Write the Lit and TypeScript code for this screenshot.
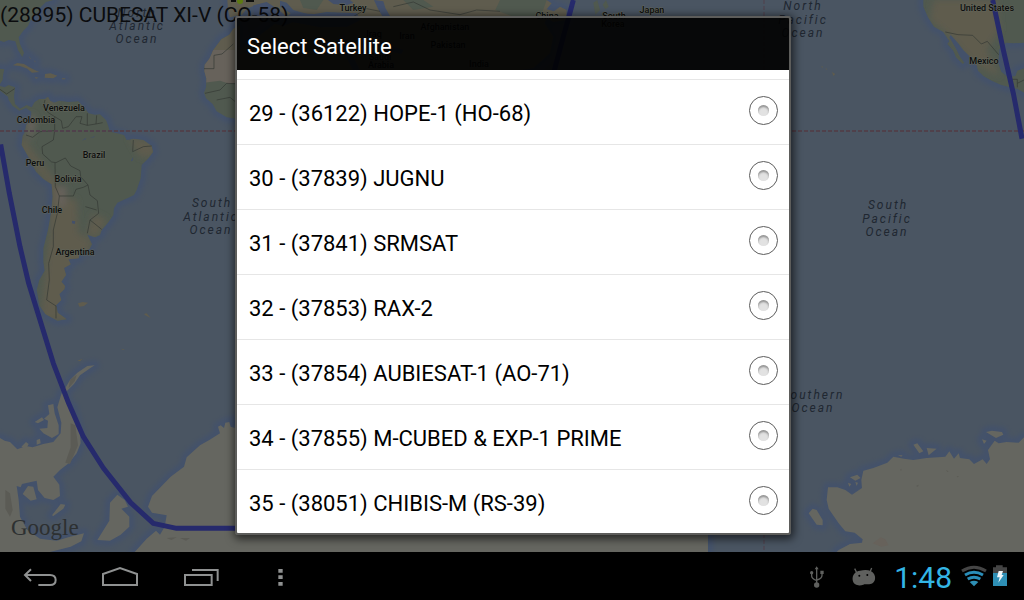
import { LitElement, html, svg, css } from "lit";
import { customElement, property } from "lit/decorators.js";

interface Satellite {
  index: number;
  norad: string;
  name: string;
}

interface MapLabel {
  x: number;
  y: number;
  text: string;
}

const SATELLITES: Satellite[] = [
  { index: 29, norad: "36122", name: "HOPE-1 (HO-68)" },
  { index: 30, norad: "37839", name: "JUGNU" },
  { index: 31, norad: "37841", name: "SRMSAT" },
  { index: 32, norad: "37853", name: "RAX-2" },
  { index: 33, norad: "37854", name: "AUBIESAT-1 (AO-71)" },
  { index: 34, norad: "37855", name: "M-CUBED & EXP-1 PRIME" },
  { index: 35, norad: "38051", name: "CHIBIS-M (RS-39)" },
];

const COUNTRIES: MapLabel[] = [
  { x: 64, y: 111, text: "Venezuela" },
  { x: 36, y: 123, text: "Colombia" },
  { x: 94, y: 158, text: "Brazil" },
  { x: 35, y: 166, text: "Peru" },
  { x: 68, y: 182, text: "Bolivia" },
  { x: 52, y: 213, text: "Chile" },
  { x: 75, y: 255, text: "Argentina" },
  { x: 987, y: 11, text: "United States" },
  { x: 984, y: 64, text: "Mexico" },
  { x: 353, y: 11, text: "Turkey" },
  { x: 547, y: 19, text: "China" },
  { x: 614, y: 19, text: "South" },
  { x: 613, y: 27, text: "Korea" },
  { x: 652, y: 13, text: "Japan" },
  { x: 445, y: 30, text: "Afghanistan" },
  { x: 374, y: 37, text: "Iraq" },
  { x: 407, y: 39, text: "Iran" },
  { x: 448, y: 48, text: "Pakistan" },
  { x: 380, y: 60, text: "Saudi" },
  { x: 381, y: 68, text: "Arabia" },
  { x: 479, y: 67, text: "India" },
];

const OCEANS: MapLabel[] = [
  { x: 137, y: 17, text: "North" },
  { x: 137, y: 30, text: "Atlantic" },
  { x: 137, y: 43, text: "Ocean" },
  { x: 212, y: 207, text: "South" },
  { x: 211, y: 221, text: "Atlantic" },
  { x: 211, y: 234, text: "Ocean" },
  { x: 803, y: 10, text: "North" },
  { x: 803, y: 24, text: "Pacific" },
  { x: 803, y: 37, text: "Ocean" },
  { x: 888, y: 209, text: "South" },
  { x: 887, y: 223, text: "Pacific" },
  { x: 887, y: 236, text: "Ocean" },
  { x: 813, y: 399, text: "Southern" },
  { x: 813, y: 412, text: "Ocean" },
];

const SOUTH_AMERICA =
  "M0,258 L14,262 26,255 45,262 42,290 45,312 60,326 80,315 95,322 104,306 118,297 135,297 144,290 150,302 162,308 178,302 205,306 235,304 252,322 266,340 285,344 300,343 318,360 324,376 330,395 345,398 372,405 380,420 400,416 430,420 455,438 459,456 444,476 425,495 422,535 410,570 402,585 385,593 352,608 342,625 340,645 324,668 305,690 300,705 285,712 262,704 276,733 268,748 240,752 236,775 205,778 212,793 192,804 198,825 184,845 195,858 193,868 178,882 184,900 168,916 173,938 200,958 172,962 136,942 118,916 110,870 118,840 134,812 130,785 130,745 144,690 153,640 158,590 155,553 130,537 108,515 85,470 65,435 68,408 75,395 78,375 92,360 94,335 78,324 58,332 38,318 26,300 24,290 0,272Z";

const NORTH_AMERICA_EAST =
  "M0,0 H160 L138,6 122,22 108,44 92,60 84,78 70,92 56,112 60,132 72,158 67,171 54,150 46,124 26,120 12,126 0,122Z M0,206 L13,208 9,226 8,240 0,252Z";

const CARIBBEAN =
  "M38,196 L52,189 72,192 88,202 104,210 118,216 96,218 82,206 60,198Z M135,222 L152,220 172,227 160,235 134,233Z M104,231 l12,2 -8,3Z M186,235 h10 v3 h-10Z M88,168 l4,8 -2,1Z M102,180 l5,6 -2,1Z";

const AFRICA_WEST =
  "M720,76 L700,86 688,104 664,118 640,150 628,176 614,194 613,214 619,236 618,262 612,278 618,295 638,312 650,334 680,352 720,358Z";

const EURASIA =
  "M682,0 H1640 L1655,10 1640,28 1662,34 1680,20 1700,30 1698,60 1660,66 1640,54 1634,70 1660,110 1650,160 1600,205 1540,214 H720 V150 L840,60 900,70 1040,80 1080,60 1068,40 980,36 930,44 880,30 860,8 840,2 840,20 872,40 860,52 828,24 800,8 770,14 740,26 726,44 690,52 684,30Z";

const SEAS =
  "M760,16 L800,6 836,30 862,52 886,34 900,40 980,44 1072,40 1076,62 1040,80 960,82 880,66 850,78 790,62 762,44Z M984,0 H1050 L1060,8 1040,16 1000,12Z M1122,0 L1150,4 1156,24 1170,48 1148,50 1134,26Z M1110,104 L1150,128 1210,150 1204,162 1150,150Z M1030,100 L1050,150 1080,212 1060,212 1028,150Z";

const NORTH_AMERICA_WEST =
  "M2770,0 H3072 V128 L3040,130 3018,128 2998,148 2995,190 3004,215 3024,232 3046,228 3052,212 3072,205 V278 L3052,266 3030,262 3002,254 2975,242 2950,228 2934,212 2930,196 2912,172 2890,150 2875,130 2852,104 2848,112 2868,146 2880,170 2893,188 2888,192 2868,172 2860,152 2842,132 2848,124 2830,96 2802,80 2784,52 2770,20Z";

const ANTARCTICA_WEST =
  "M0,1314 L14,1322 30,1326 52,1348 78,1338 98,1342 130,1332 160,1326 182,1300 184,1268 172,1222 184,1182 196,1164 210,1140 232,1118 262,1098 284,1096 268,1106 240,1126 222,1152 200,1174 198,1200 218,1220 228,1256 240,1300 242,1330 230,1360 206,1390 180,1410 160,1430 178,1454 180,1488 160,1500 134,1494 114,1470 110,1442 66,1452 62,1462 50,1458 56,1500 60,1550 82,1590 120,1616 170,1622 210,1610 252,1600 244,1624 212,1640 150,1656 H0Z M144,1216 L160,1212 164,1240 176,1276 176,1302 156,1314 130,1300 118,1286 142,1284 144,1262 132,1256 148,1242Z M104,1266 l22,-14 6,8 -18,10Z M64,1340 l14,-14 8,6 -6,12Z M110,1320 l10,-4 2,14 -12,4Z M68,1482 L84,1458 100,1460 110,1498 92,1502Z M156,1546 L182,1512 196,1514 190,1526 160,1548Z M292,1620 L328,1562 330,1508 352,1484 374,1500 384,1520 364,1526 388,1550 388,1580 362,1604 330,1622Z";

const ANTARCTICA_MID =
  "M720,1260 L706,1260 704,1284 692,1280 688,1266 676,1268 672,1284 662,1276 654,1280 660,1300 628,1320 600,1336 560,1372 552,1400 512,1430 456,1488 444,1520 456,1538 500,1546 494,1580 480,1604 468,1592 440,1616 404,1656 H2124 V1260Z";

const ANTARCTICA_EAST =
  "M3072,1312 L3056,1328 3020,1326 2996,1330 2984,1322 2964,1350 2970,1378 2960,1392 2948,1378 2922,1392 2908,1378 2880,1374 2876,1360 2862,1376 2848,1354 2836,1370 2780,1374 2740,1380 2712,1376 2680,1370 2662,1388 2620,1404 2590,1412 2584,1440 2586,1464 2556,1484 2536,1470 2512,1462 2484,1462 2480,1500 2486,1526 2516,1570 2536,1594 2564,1598 2588,1618 2586,1628 2550,1632 2516,1650 2510,1656 H3072Z M2426,1540 L2438,1526 2450,1530 2468,1560 2468,1576 2450,1574Z M2740,1334 l12,-4 18,24 -12,6Z M2780,1344 l30,2 -24,20Z M2958,1296 l18,-4 30,4 4,8 -22,10Z M2946,1318 l14,4 -8,10Z M2550,1432 l22,-8 10,10 -16,8Z M2544,1448 l10,4 -6,8Z M2566,1446 l8,2 -4,10Z M2694,1366 l14,0 -4,4Z";

const ISLANDS =
  "M234,910 l14,-4 16,2 -12,10 -14,2Z M432,942 l8,-2 12,14 -16,-8Z M362,1046 l12,2 -4,2Z M232,1082 l16,-6 -8,8Z M2464,198 l6,3 -4,2Z M2496,216 l10,6 -6,6Z M2476,205 l6,2 -3,2Z";

const BORDERS =
  "M135,300 L130,320 142,336 164,350 164,392 M164,350 L184,362 188,385 205,380 228,350 246,350 240,370 262,376 262,340 M262,376 L288,372 290,346 M288,372 L308,368 M78,405 L98,412 120,395 164,392 160,420 126,440 128,462 155,486 168,488 196,474 212,498 240,512 242,530 264,555 250,562 228,568 220,588 178,588 166,560 165,488 M264,555 L270,585 292,602 296,640 270,660 262,700 M256,620 L290,630 M270,660 L305,688 M178,588 L172,640 160,690 160,740 146,790 148,840 140,900 168,918 168,955 M400,420 L398,455 430,440 455,438 M0,268 L20,282 44,266 M612,206 L642,206 642,166 666,162 700,132 M615,280 L660,270 680,250 720,252 M650,300 L690,292 712,310 M2836,96 L2874,104 2918,106 2944,132 2962,124 2984,150 2996,164 M3030,262 V238 H3052 V262 M3052,250 L3072,240 M1180,20 L1240,6 1290,30 1380,44 1430,30 1500,34 M1060,50 L1100,26 1140,34";

@customElement("world-map")
export class WorldMap extends LitElement {
  static styles = css`
    :host {
      display: block;
      overflow: hidden;
      background: #4a5562;
    }
    .canvas {
      display: block;
      width: 100%;
      height: 100%;
    }
    .shelf {
      fill: none;
      stroke: #405070;
      stroke-width: 30;
      stroke-linejoin: round;
      opacity: 0.6;
      filter: blur(6px);
    }
    .green {
      fill: #50594f;
    }
    .tan {
      fill: #5f5c4e;
    }
    .sand {
      fill: #67625b;
    }
    .ice {
      fill: #656660;
    }
    .rock {
      fill: #5b5b55;
    }
    .sea {
      fill: #43506a;
    }
    .border {
      fill: none;
      stroke: #343833;
      stroke-width: 2;
    }
    .grid {
      fill: none;
      stroke: #50414b;
      stroke-width: 6;
      stroke-dasharray: 12 6;
    }
    .meridian {
      fill: none;
      stroke: #50414b;
      stroke-width: 3;
      stroke-dasharray: 12 6;
    }
    .track {
      fill: none;
      stroke: #262a6c;
      stroke-width: 15;
      stroke-linejoin: round;
    }
    .country {
      font: 500 9px Roboto, sans-serif;
      fill: #0d0e0d;
      stroke: #62665c;
      stroke-width: 1px;
      paint-order: stroke;
      text-anchor: middle;
    }
    .ocean {
      font: italic 400 12px Roboto, sans-serif;
      letter-spacing: 2px;
      fill: #202731;
      text-anchor: middle;
    }
    .brand {
      font: 400 23px "Liberation Serif", serif;
      fill: #2d3031;
    }
  `;

  render() {
    return html`
      <svg
        class="canvas"
        viewBox="0 0 1024 552"
        preserveAspectRatio="xMidYMid slice"
        role="img"
        aria-label="World map with satellite ground track"
      >
        <defs>
          <clipPath id="sa"><path d=${SOUTH_AMERICA} /></clipPath>
          <clipPath id="na"><path d=${NORTH_AMERICA_WEST} /></clipPath>
          <clipPath id="af"><path d=${AFRICA_WEST} /></clipPath>
          <filter id="soft"><feGaussianBlur stdDeviation="9" /></filter>
        </defs>
        <g transform="scale(0.33333)">
          <g class="shelf">
            <path d=${SOUTH_AMERICA} />
            <path d=${NORTH_AMERICA_EAST} />
            <path d=${NORTH_AMERICA_WEST} />
            <path d=${CARIBBEAN} />
            <path d=${AFRICA_WEST} />
            <path d=${EURASIA} />
            <path d=${ANTARCTICA_WEST} />
            <path d=${ANTARCTICA_MID} />
            <path d=${ANTARCTICA_EAST} />
          </g>
          <path class="green" d=${SOUTH_AMERICA} />
          <g clip-path="url(#sa)">
            <g filter="url(#soft)">
              <path
                class="tan"
                d="M60,400 L90,440 165,540 185,590 230,600 235,700 275,720 240,960 120,960 150,700 150,560 60,450Z M385,410 L470,430 460,470 420,470Z M130,285 L170,300 150,330Z M280,640 L320,660 290,715 260,700Z"
              />
              <path class="sand" d="M80,370 l18,-30 10,30 -20,60Z M170,560 l30,0 -5,60 -20,0Z" />
            </g>
            <path
              class="sea"
              d="M216,662 l10,2 -2,8 -8,-2Z M400,470 l-8,14 6,-2Z M245,422 l12,-8 2,3Z M270,414 l14,-6 -2,4Z M135,312 l6,6 -4,6Z M380,418 l12,-2 -4,5Z"
            />
          </g>
          <path class="green" d=${NORTH_AMERICA_EAST} />
          <path class="tan" d=${CARIBBEAN} />
          <path class="green" d=${AFRICA_WEST} />
          <g clip-path="url(#af)">
            <path class="tan" d="M600,60 H720 V165 H640Z" />
            <path class="sand" d="M600,150 H720 V246 L690,252 660,242 600,250Z" />
          </g>
          <path class="tan" d=${EURASIA} />
          <path
            class="green"
            d="M900,0 h70 l-20,30 -40,-6Z M1210,0 h60 l30,20 -60,10Z M1500,0 h140 l-14,40 -60,20 -80,-30Z M1780,8 l12,-8 8,30 -14,14Z M1808,14 l10,-14 8,20 -10,8Z"
          />
          <path class="sea" d=${SEAS} />
          <path class="green" d=${NORTH_AMERICA_WEST} />
          <g clip-path="url(#na)">
            <g filter="url(#soft)">
              <path
                class="tan"
                d="M2800,0 H2990 L3000,90 2960,150 3000,230 2920,190 2840,100 2790,60Z"
              />
            </g>
          </g>
          <path class="tan" d=${ISLANDS} />
          <path class="ice" d=${ANTARCTICA_WEST} />
          <path class="ice" d=${ANTARCTICA_MID} />
          <path class="ice" d=${ANTARCTICA_EAST} />
          <path
            class="rock"
            d="M212,1270 l14,6 8,60 -24,56 -14,-4 16,-46Z M16,1470 l14,10 8,50 -8,20 -14,-24Z M500,1614 l30,-2 -16,8Z M540,1614 l30,0 -12,8Z M210,1140 l20,-16 -6,20 -18,20Z M2700,1410 l4,-4 0,6Z M2748,1458 l8,-4 -2,6Z M2838,1410 l8,4 -4,2Z M2870,1428 l8,2 -6,2Z"
          />
          <path class="sand" d="M2618,1630 l24,-18 14,6 10,18 -22,4Z" />
          <path class="border" d=${BORDERS} />
          <path class="grid" d="M0,393 H3072" />
          <path class="meridian" d="M2292,0 V1656" />
          <path
            class="track"
            d="M2,433 L28,580 60,740 86,850 120,960 160,1090 206,1210 250,1310 310,1404 392,1508 460,1570 530,1585 H760 M1720,0 L1704,60 1690,110 1650,260 M2978,0 L3010,150 3040,280 3066,416"
          />
        </g>
        ${COUNTRIES.map((l) => svg`<text class="country" x=${l.x} y=${l.y}>${l.text}</text>`)}
        ${OCEANS.map((l) => svg`<text class="ocean" x=${l.x} y=${l.y}>${l.text}</text>`)}
        <circle cx="240" cy="1" r="3" fill="#5d7a12" />
        <path d="M231,1 h5 M246,1 h8" stroke="#0d0e0d" stroke-width="2" />
        <text class="brand" x="11" y="535">Google</text>
      </svg>
    `;
  }
}

@customElement("satellite-dialog")
export class SatelliteDialog extends LitElement {
  @property({ attribute: false }) satellites: Satellite[] = [];

  static styles = css`
    :host {
      box-sizing: border-box;
      display: flex;
      flex-direction: column;
      max-width: 556px;
      width: 100%;
      max-height: 100%;
      border: 2px solid #5d5d5b;
      border-radius: 3px;
      box-shadow: 1px 2px 9px 2px rgba(0, 0, 0, 0.6);
      font-family: Roboto, sans-serif;
      overflow: hidden;
    }
    .title {
      flex: none;
      margin: 0;
      padding: 6px 10px 0;
      background: rgba(0, 0, 0, 0.9);
      color: #fff;
      font-size: 22px;
      font-weight: 400;
      line-height: 46px;
    }
    .list {
      margin: 0;
      padding: 0;
      border: 0;
      min-width: 0;
      min-height: 0;
      overflow: hidden;
      background: #fff;
    }
    .previous {
      height: 9px;
      border-bottom: 1px solid #e6e6e6;
    }
    .row {
      display: flex;
      align-items: center;
      justify-content: space-between;
      gap: 12px;
      height: 64px;
      padding: 0 11px 0 12px;
      border-bottom: 1px solid #e6e6e6;
      color: #000;
      font-size: 22px;
    }
    .name {
      padding-top: 2px;
    }
    .radio {
      appearance: none;
      flex: none;
      box-sizing: border-box;
      display: grid;
      place-items: center;
      width: 29px;
      height: 29px;
      margin: 0 0 3px;
      border: 1px solid #5c5c5c;
      border-radius: 50%;
      background: #fff;
    }
    .radio::before {
      content: "";
      width: 11px;
      height: 11px;
      border-radius: 50%;
      background: #e2e2e2;
      box-shadow: inset 0 2px 2px #949494;
    }
    .radio:checked::before {
      background: #33b5e5;
    }
  `;

  render() {
    return html`
      <h1 class="title">Select Satellite</h1>
      <fieldset class="list" aria-label="Select Satellite">
        <div class="previous"></div>
        ${this.satellites.map(
          (s) => html`
            <label class="row">
              <span class="name">${s.index} - (${s.norad}) ${s.name}</span>
              <input class="radio" type="radio" name="satellite" value=${s.norad} />
            </label>
          `
        )}
      </fieldset>
    `;
  }
}

@customElement("system-bar")
export class SystemBar extends LitElement {
  static styles = css`
    :host {
      display: flex;
      align-items: center;
      justify-content: space-between;
      height: 48px;
      background: #000;
      font-family: Roboto, sans-serif;
    }
    .keys,
    .status {
      display: flex;
      align-items: center;
    }
    .status {
      padding-right: 17px;
    }
    .key {
      width: 80px;
      height: 48px;
      padding: 0;
      border: 0;
      background: none;
    }
    .icon {
      display: block;
      height: 48px;
    }
    .line {
      fill: none;
      stroke: #8f9191;
      stroke-width: 6;
    }
    .solid {
      fill: #8f9191;
    }
    .grey {
      fill: #5f605e;
    }
    .wire {
      fill: none;
      stroke: #5f605e;
      stroke-width: 4;
    }
    .usb {
      width: 16px;
      margin-right: 27px;
    }
    .droid {
      width: 24px;
      margin-right: 18px;
    }
    .clock {
      padding-top: 3px;
      color: #33b5e5;
      font-size: 30px;
      line-height: 45px;
      margin-right: 9px;
    }
    .wifi {
      width: 26px;
      margin-right: 6px;
    }
    .battery {
      width: 14px;
    }
    .dim {
      fill: none;
      stroke: #454545;
      stroke-width: 9;
    }
    .arc {
      fill: none;
      stroke: #2a8db8;
      stroke-width: 9;
    }
    .blue {
      fill: #2e8fb5;
    }
    .cap {
      fill: #444;
    }
    .bolt {
      fill: #eef6fa;
    }
  `;

  render() {
    return html`
      <nav class="keys">
        <button class="key" aria-label="Back">
          <svg class="icon" viewBox="0 0 240 144">
            <path class="line" d="M93,52 L75,69 93,87 M75,69 H150 C163,69 167,76 167,84 C167,93 162,99 150,99 H115" />
          </svg>
        </button>
        <button class="key" aria-label="Home">
          <svg class="icon" viewBox="0 0 240 144">
            <path class="line" d="M69,99 V66 L120,48 171,66 V99 Z" />
          </svg>
        </button>
        <button class="key" aria-label="Recent apps">
          <svg class="icon" viewBox="0 0 240 144">
            <path class="line" d="M75,69 H155 V99 H75 Z M96,54 H173 V87" />
          </svg>
        </button>
        <button class="key" aria-label="Menu">
          <svg class="icon" viewBox="0 0 240 144">
            <path class="solid" d="M115,51 h13 v11 h-13Z M115,70 h13 v11 h-13Z M115,90 h13 v11 h-13Z" />
          </svg>
        </button>
      </nav>
      <div class="status">
        <svg class="icon usb" viewBox="75 0 48 144">
          <path class="wire" d="M98,50 V100 M83,64 V72 Q83,80 97,85 M114,60 V70 Q114,80 99,84" />
          <path class="grey" d="M98,43 l6,9 h-12Z M109,56 h10 v10 h-10Z" />
          <circle class="grey" cx="83" cy="62" r="5" />
          <circle class="grey" cx="98" cy="99" r="8" />
        </svg>
        <svg class="icon droid" viewBox="204 0 72 144">
          <path
            class="grey"
            d="M206,84 C204,68 214,58 228,56 C240,53 252,53 260,57 C270,62 275,72 273,82 C271,93 262,97 252,97 C246,97 242,96 238,98 C230,101 220,101 214,97 C209,94 207,89 206,84Z"
          />
          <path class="wire" d="M212,50 L218,62 M263,48 L258,60" />
          <circle cx="226" cy="71" r="3" />
          <circle cx="250" cy="69" r="3" />
        </svg>
        <time class="clock">1:48</time>
        <svg class="icon wifi" viewBox="531 0 78 144">
          <path class="dim" d="M534,57 Q570,34 606,57" />
          <path class="arc" d="M543,69 Q570,53 597,69" />
          <path class="arc" d="M551,81 Q570,70 589,81" />
          <path class="blue" d="M557,90 Q570,82 583,90 L570,103Z" />
        </svg>
        <svg class="icon battery" viewBox="627 0 42 144">
          <path class="cap" d="M636,40 h20 v6 h13 v18 h-42 v-18 h9Z" />
          <path class="blue" d="M627,63 h42 v39 h-42Z" />
          <path class="bolt" d="M644,57 h13 l-4,12 h6 l-16,23 4,-16 h-8Z" />
        </svg>
      </div>
    `;
  }
}

@customElement("app-root")
export class AppRoot extends LitElement {
  static styles = css`
    :host {
      display: flex;
      flex-direction: column;
      height: 100vh;
      font-family: Roboto, sans-serif;
    }
    .screen {
      flex: 1;
      min-height: 0;
      display: grid;
      grid-template: minmax(0, 1fr) / minmax(0, 1fr);
      overflow: hidden;
    }
    .map,
    .tracked,
    .overlay {
      grid-area: 1 / 1;
    }
    .tracked {
      margin: 0;
      color: #0b0c0e;
      font-size: 21px;
      line-height: 30px;
    }
    .overlay {
      display: flex;
      align-items: center;
      justify-content: center;
      box-sizing: border-box;
      min-height: 0;
      padding: 16px 14px 17px 16px;
    }
  `;

  render() {
    return html`
      <main class="screen">
        <world-map class="map"></world-map>
        <p class="tracked">(28895) CUBESAT XI-V (CO-58)</p>
        <div class="overlay">
          <satellite-dialog role="dialog" aria-label="Select Satellite" .satellites=${SATELLITES}></satellite-dialog>
        </div>
      </main>
      <system-bar></system-bar>
    `;
  }
}
